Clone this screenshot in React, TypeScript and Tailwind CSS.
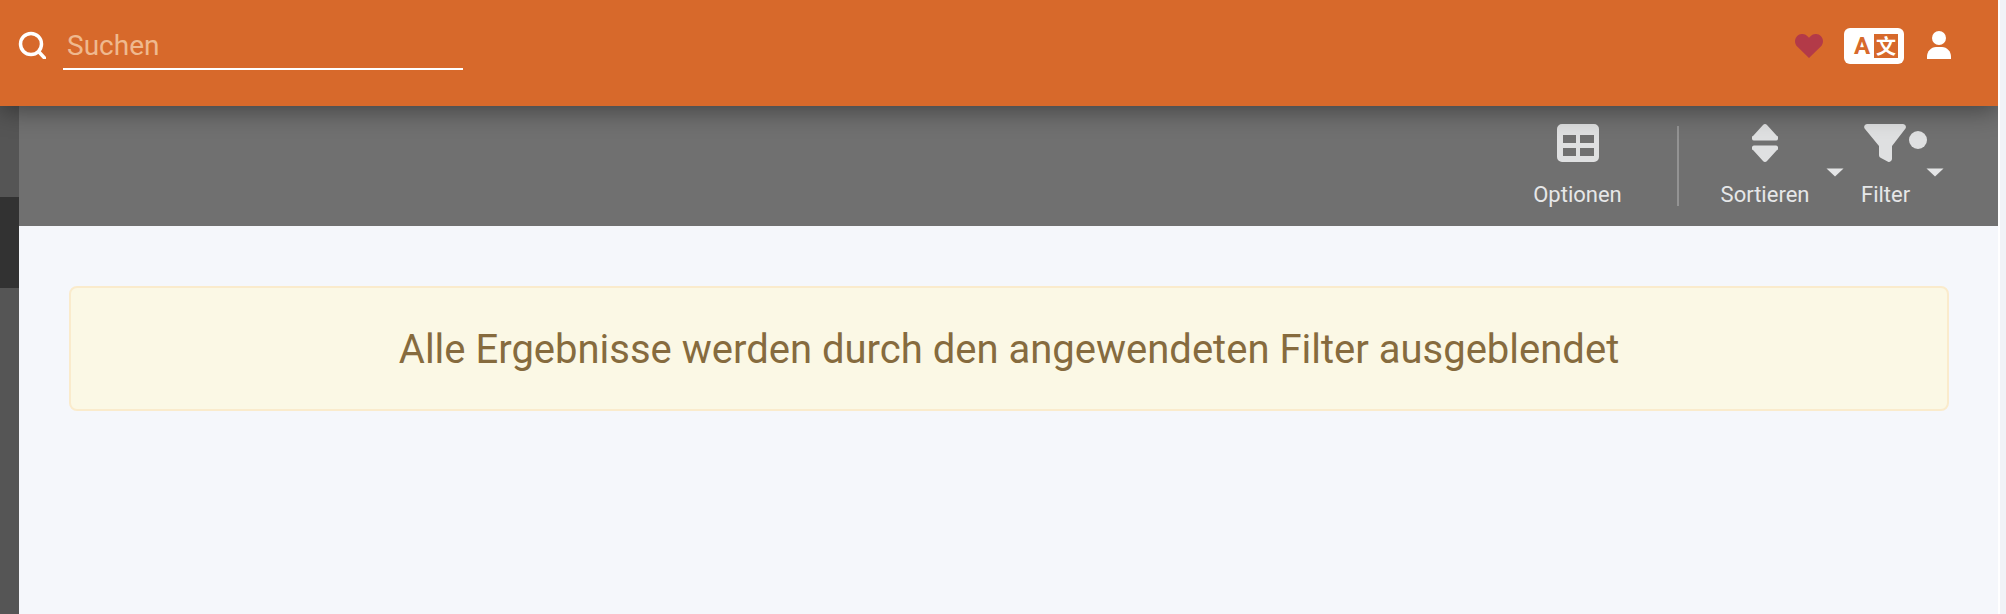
import React from 'react';

const font = { roboto: "font-['Roboto',sans-serif]" };

const SearchIcon = () => (
  <svg width="28" height="28" viewBox="0 0 28 28" className="block" fill="none" stroke="#fff">
    <circle cx="13" cy="13" r="10.500" strokeWidth="3.500" />
    <path d="M21 21 26.500 27" strokeWidth="3.500" strokeLinecap="round" />
  </svg>
);

const Caret = () => (
  <svg width="18" height="9" viewBox="0 0 18 9" className="block">
    <path d="M0.5 0.5H17.5L9 8.5Z" fill="#e4e5e6" />
  </svg>
);

const TableIcon = () => (
  <svg width="42" height="38" viewBox="0 0 42 38" className="block">
    <path
      fillRule="evenodd"
      fill="#dfe0e1"
      d="M5 0H37a5 5 0 0 1 5 5V33a5 5 0 0 1-5 5H5a5 5 0 0 1-5-5V5a5 5 0 0 1 5-5ZM6 11V19H19V11ZM23 11V19H37V11ZM6 24V32H19V24ZM23 24V32H37V24Z"
    />
  </svg>
);

const SortIcon = () => (
  <svg width="26" height="38" viewBox="0 0 26 38" className="block">
    <path d="M13 0a3 3 0 0 1 2 1L25 12a2 2 0 0 1 1 3a2 2 0 0 1-2 1.500H2a2 2 0 0 1-2-1.500a2 2 0 0 1 1-3L11 1a3 3 0 0 1 2-1Z" fill="#dfe0e1" />
    <path d="M13 38a3 3 0 0 0 2-1L25 26a2 2 0 0 0 1-3a2 2 0 0 0-2-1.500H2a2 2 0 0 0-2 1.500a2 2 0 0 0 1 3L11 37a3 3 0 0 0 2 1Z" fill="#dfe0e1" />
  </svg>
);

const FilterIcon = () => (
  <svg width="64" height="38" viewBox="0 0 64 38" className="block">
    <path d="M3 0H39a3 3 0 0 1 2.500 4.500L28 22V35a3 3 0 0 1-4 2.700L17 34a3 3 0 0 1-2-3V22L.6 4.500A3 3 0 0 1 3 0Z" fill="#dfe0e1" />
    <circle cx="54" cy="16" r="9" fill="#dfe0e1" />
  </svg>
);

const HeartIcon = () => (
  <svg width="28" height="24" viewBox="0 0 28 24" className="block">
    <path d="M14 24 2.200 12.600C-.7 9.700-.7 4.800 2.200 2 5-.7 9.400-.7 12.200 2L14 3.800 15.800 2c2.800-2.700 7.200-2.700 10 0 2.900 2.800 2.900 7.700 0 10.600Z" fill="#b33a48" />
  </svg>
);

const UserIcon = () => (
  <svg width="24" height="28" viewBox="0 0 24 28" className="block">
    <circle cx="12" cy="7" r="7" fill="#fff" />
    <path d="M0 28v-2.500C0 20.500 4 16 9 16h6c5 0 9 4.500 9 9.500V28Z" fill="#fff" />
  </svg>
);

const App: React.FC = () => {
  return (
    <div className={`flex h-[614px] w-[2006px] overflow-hidden bg-[#f5f7fb] ${font.roboto}`}>
      <div className="flex w-[1998px] flex-col overflow-hidden">
        {/* top bar */}
        <header className="relative z-10 flex h-[106px] items-start justify-between bg-[#d7692b] pr-[47px] shadow-[0_4px_24px_rgba(0,0,0,0.42)]">
          <div className="flex items-start pl-[18px] pt-[31px]">
            <SearchIcon />
            <div className="ml-[17px] mt-[-2px] h-[41px] w-[400px] border-b-2 border-white pl-1 text-[28px] leading-[34px] text-[#efb98f]">
              Suchen
            </div>
          </div>
          <div className="flex items-start pt-[28px]">
            <div className="mr-[21px] mt-[6px]">
              <HeartIcon />
            </div>
            <div className="mr-[23px] flex h-[36px] w-[60px] items-center rounded-[6px] bg-white pl-[6px]">
              <span className="w-[24px] text-center text-[24px] font-bold leading-[24px] text-[#d7692b]">A</span>
              <span className="flex h-[24px] w-[24px] items-center justify-center bg-[#d7692b] font-['Noto_Sans_CJK_SC',sans-serif] text-[20px] font-bold leading-none text-white">
                文
              </span>
            </div>
            <div className="mt-[3px]">
              <UserIcon />
            </div>
          </div>
        </header>

        <div className="flex flex-1">
          {/* sidebar */}
          <div className="flex w-[19px] flex-col bg-[#555555]">
            <div className="h-[91px]" />
            <div className="h-[91px] bg-[#323232]" />
          </div>

          <main className="flex flex-1 flex-col">
            {/* toolbar */}
            <div className="flex h-[120px] items-start justify-end bg-[#707070] pr-[88px] pt-[18px] text-[22px] leading-[24px] text-[#e6e7e8]">
              <div className="flex w-[87px] flex-col items-center">
                <TableIcon />
                <span className="mt-[21px] whitespace-nowrap">Optionen</span>
              </div>
              <div className="ml-[56px] mr-[42px] mt-[2px] h-[80px] w-[2px] bg-[#939393]" />
              <div className="relative flex w-[88px] flex-col items-center">
                <SortIcon />
                <span className="mt-[21px] whitespace-nowrap">Sortieren</span>
                <div className="absolute left-[105px] top-[44px]">
                  <Caret />
                </div>
              </div>
              <div className="relative ml-[52px] flex w-[49px] flex-col items-start">
                <div className="ml-[3px]">
                  <FilterIcon />
                </div>
                <span className="mt-[21px] whitespace-nowrap">Filter</span>
                <div className="absolute left-[65px] top-[44px]">
                  <Caret />
                </div>
              </div>
            </div>

            {/* content */}
            <div className="pl-[50px] pr-[49px] pt-[60px]">
              <div className="flex h-[125px] items-center justify-center rounded-[8px] border-2 border-[#faebcc] bg-[#fbf8e5] pt-[2px] text-[40px] text-[#866b3e]">
                Alle Ergebnisse werden durch den angewendeten Filter ausgeblendet
              </div>
            </div>
          </main>
        </div>
      </div>
      {/* scrollbar gutter */}
      <div className="flex-1 border-l-2 border-white bg-[#f1f2f7]" />
    </div>
  );
};

export default App;
